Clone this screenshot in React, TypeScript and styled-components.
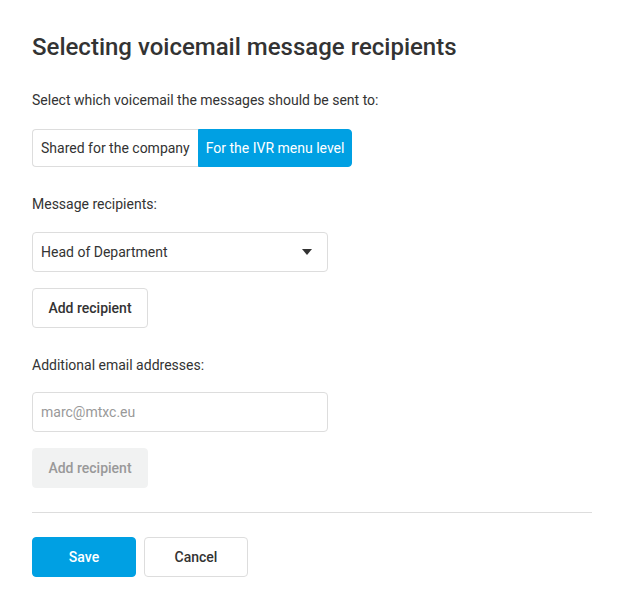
import * as React from 'react'
import styled, { createGlobalStyle } from 'styled-components'

// ***** Global
const GlobalStyle = createGlobalStyle`
  html, body {
    margin: 0;
    padding: 0;
    background: #ffffff;
  }
  body {
    font-family: Roboto, "Liberation Sans", Arial, sans-serif;
    color: #333333;
  }
  * { box-sizing: border-box; }
`

// ***** Styled Components
const Page = styled.main`
  width: 560px;
  margin: 0 32px;
  padding-top: 31px;
  display: flex;
  flex-direction: column;
`

const Title = styled.h1`
  margin: 0;
  font-size: 24px;
  line-height: 32px;
  font-weight: 500;
  color: #333333;
`

const Label = styled.p`
  margin: 0;
  font-size: 14px;
  line-height: 20px;
  color: #333333;
`

const Section = styled.section<{ $top: number }>`
  display: flex;
  flex-direction: column;
  align-items: flex-start;
  margin-top: ${(p) => p.$top}px;
`

const Segmented = styled.div`
  display: flex;
  height: 38px;
  margin-top: 19px;
`

const Segment = styled.button<{ $active?: boolean }>`
  font-family: inherit;
  font-size: 14px;
  padding: 0 ${(p) => (p.$active ? 7 : 8)}px;
  height: 38px;
  cursor: pointer;
  border: 1px solid ${(p) => (p.$active ? '#00a0e3' : '#dddddd')};
  background: ${(p) => (p.$active ? '#00a0e3' : '#ffffff')};
  color: ${(p) => (p.$active ? '#ffffff' : '#333333')};
  border-radius: ${(p) => (p.$active ? '0 4px 4px 0' : '4px 0 0 4px')};
  border-right-width: ${(p) => (p.$active ? '1px' : '0')};
`

const Select = styled.div`
  margin-top: 18px;
  width: 296px;
  height: 40px;
  border: 1px solid #dddddd;
  border-radius: 4px;
  display: flex;
  align-items: center;
  justify-content: space-between;
  padding: 0 15px 0 8px;
  font-size: 14px;
  color: #333333;
`

const Caret = styled.span`
  width: 0;
  height: 0;
  border-left: 5px solid transparent;
  border-right: 5px solid transparent;
  border-top: 6px solid #333333;
`

const Input = styled.input`
  margin-top: 17px;
  width: 296px;
  height: 40px;
  border: 1px solid #dddddd;
  border-radius: 4px;
  padding: 0 8px;
  font-family: inherit;
  font-size: 14px;
  color: #333333;
  outline: none;
  &::placeholder {
    color: #999999;
  }
`

const Button = styled.button<{ $variant?: 'primary' | 'default' | 'disabled'; $width?: number }>`
  font-family: inherit;
  font-size: 14px;
  font-weight: 500;
  height: 40px;
  width: ${(p) => p.$width ?? 116}px;
  border-radius: 4px;
  cursor: ${(p) => (p.$variant === 'disabled' ? 'default' : 'pointer')};
  border: 1px solid
    ${(p) =>
      p.$variant === 'primary' ? '#00a0e3' : p.$variant === 'disabled' ? '#f1f2f2' : '#dddddd'};
  background: ${(p) =>
    p.$variant === 'primary' ? '#00a0e3' : p.$variant === 'disabled' ? '#f1f2f2' : '#ffffff'};
  color: ${(p) =>
    p.$variant === 'primary' ? '#ffffff' : p.$variant === 'disabled' ? '#999999' : '#333333'};
`

const SpacedButton = styled(Button)`
  margin-top: 16px;
`

const Divider = styled.hr`
  margin: 24px 0 0;
  border: 0;
  border-top: 1px solid #dddddd;
  width: 560px;
`

const Actions = styled.div`
  display: flex;
  gap: 8px;
  margin-top: 24px;
`

// ***** Component
export default function App() {
  return (
    <>
      <GlobalStyle />
      <Page>
        <Title>Selecting voicemail message recipients</Title>

        <Section $top={27}>
          <Label>Select which voicemail the messages should be sent to:</Label>
          <Segmented>
            <Segment>Shared for the company</Segment>
            <Segment $active>For the IVR menu level</Segment>
          </Segmented>
        </Section>

        <Section $top={27}>
          <Label>Message recipients:</Label>
          <Select>
            <span>Head of Department</span>
            <Caret />
          </Select>
          <SpacedButton $variant="default">Add recipient</SpacedButton>
        </Section>

        <Section $top={27}>
          <Label>Additional email addresses:</Label>
          <Input placeholder="marc@mtxc.eu" />
          <SpacedButton $variant="disabled" disabled>
            Add recipient
          </SpacedButton>
        </Section>

        <Divider />

        <Actions>
          <Button $variant="primary" $width={104}>
            Save
          </Button>
          <Button $variant="default" $width={104}>
            Cancel
          </Button>
        </Actions>
      </Page>
    </>
  )
}
